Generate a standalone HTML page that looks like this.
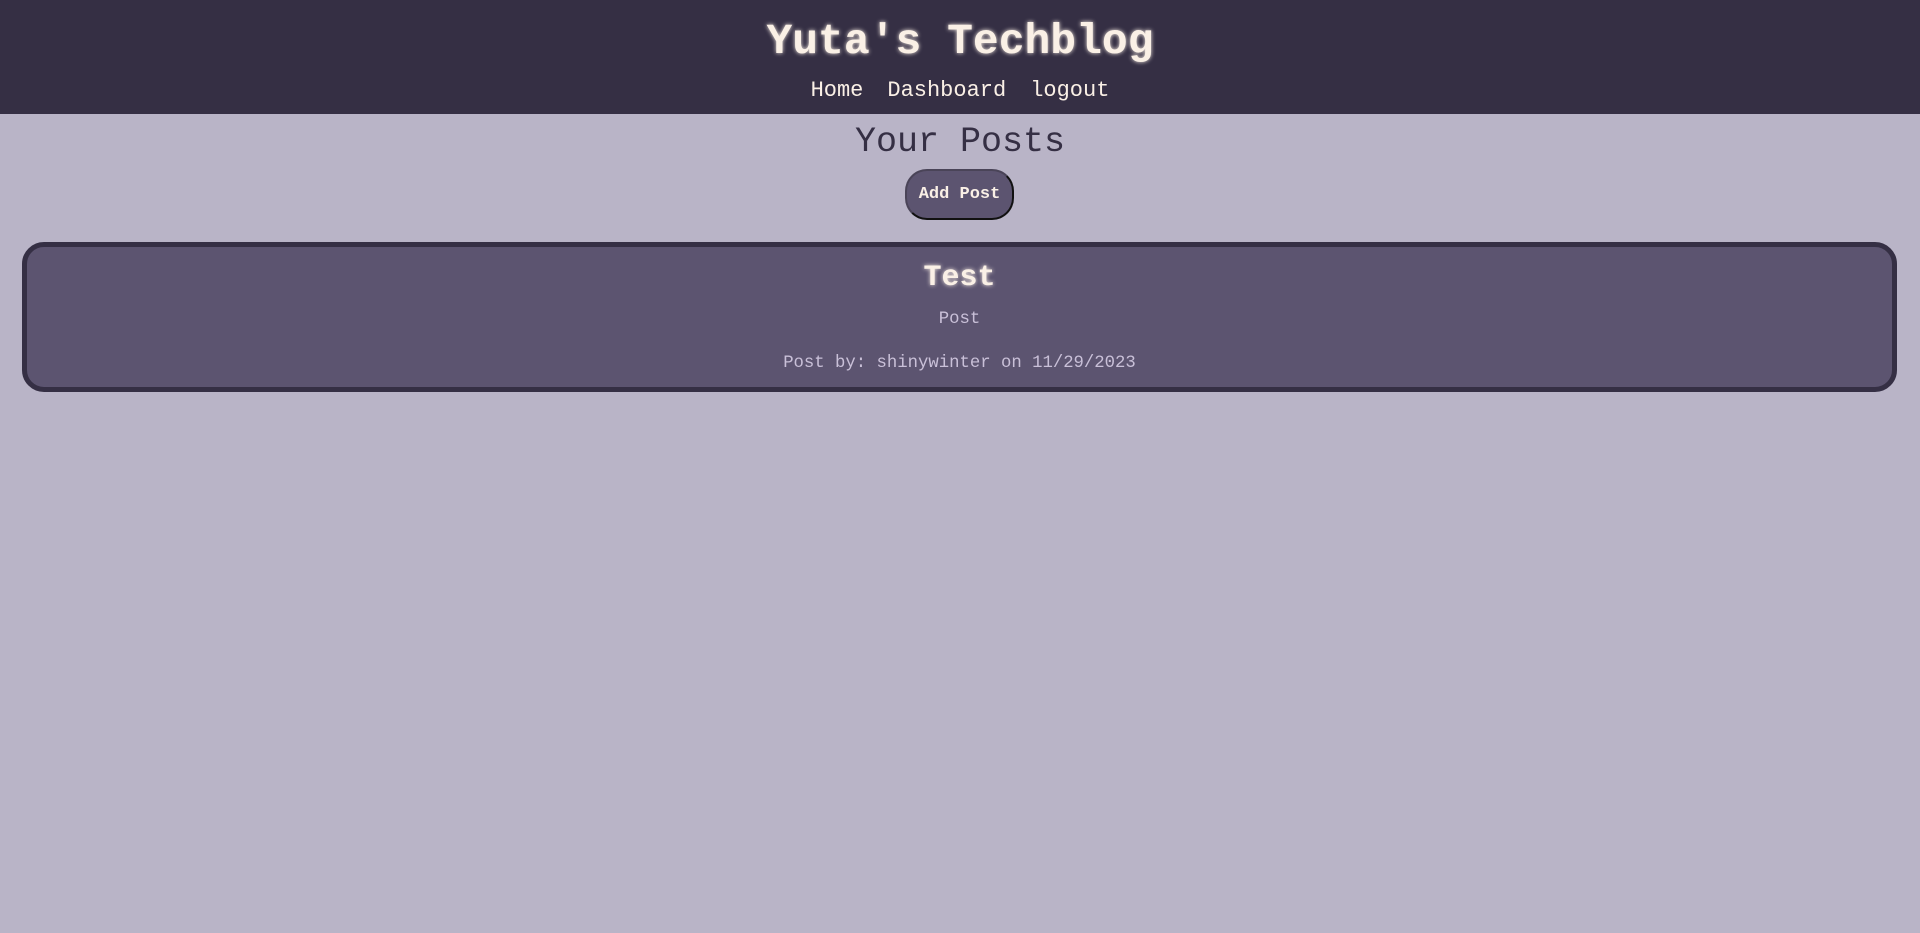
<!DOCTYPE html>
<html><head><meta charset="utf-8"><style>
body{margin:0;background:#b9b4c7;font-family:"Liberation Mono","DejaVu Sans Mono",monospace;width:1920px;height:933px;overflow:hidden}
header{background:#352f44;height:114px;text-align:center;position:relative}
h1{margin:0;position:absolute;top:17px;left:0;right:0;font-size:43px;color:#faf0e6;font-weight:bold;text-shadow:0 0 4px #faf0e6;line-height:50px}
nav{position:absolute;top:76px;left:0;right:0;font-size:22px;color:#faf0e6;line-height:30px}
nav span{margin:0 12px}
h2{margin:0;position:absolute;top:118px;left:0;right:0;text-align:center;font-size:35px;color:#352f44;font-weight:normal;line-height:48px}
.btn{position:absolute;left:905px;top:169px;width:105px;height:47px;background:#5c5470;border:2px solid #4a4458;border-bottom-color:#111;border-right-color:#111;border-radius:22px;color:#faf0e6;font-weight:bold;font-size:17px;text-align:center;line-height:47px}
.card{position:absolute;left:22px;top:242px;width:1865px;height:140px;background:#5c5470;border:5px solid #352f44;border-radius:22px;text-align:center}
.t{position:absolute;top:14px;left:0;right:0;font-size:30px;font-weight:bold;color:#faf0e6;text-shadow:0 0 4px #faf0e6}
.p{position:absolute;left:0;right:0;font-size:17.3px;color:#c9c0d8}
</style></head><body>
<header><h1>Yuta's Techblog</h1><nav><span>Home</span><span>Dashboard</span><span>logout</span></nav></header>
<h2>Your Posts</h2>
<div class="btn">Add Post</div>
<div class="card"><div class="t">Test</div><div class="p" style="top:63px">Post</div><div class="p" style="top:107px">Post by: shinywinter on 11/29/2023</div></div>
</body></html>
